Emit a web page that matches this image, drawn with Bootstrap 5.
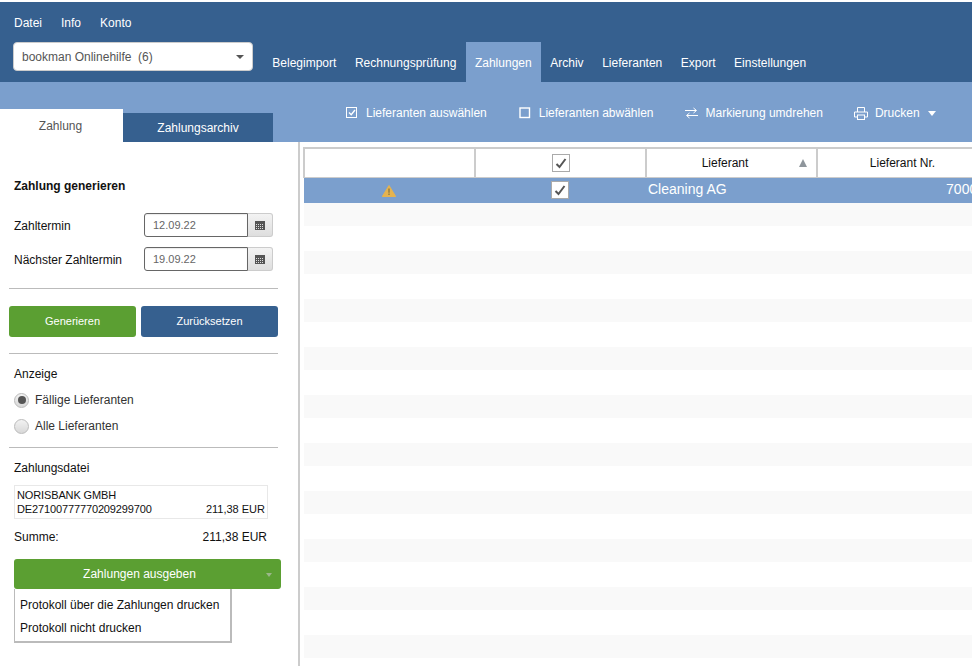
<!DOCTYPE html>
<html lang="de">
<head>
  <meta charset="UTF-8">
  <meta name="viewport" content="width=device-width, initial-scale=1.0">
  <title>bookman - Zahlungen</title>
  <link href="https://cdn.jsdelivr.net/npm/bootstrap@5.3.0/dist/css/bootstrap.min.css" rel="stylesheet">
  <style>
    html, body { height: 100%; overflow: hidden; }
    body {
      font-family: "Liberation Sans", Arial, sans-serif;
      font-size: 12px;
      color: #111;
      background: #fff;
      padding-top: 2px;
    }
    .top-bar { background: #36608f; height: 80px; color: #fff; }
    .top-menu { padding: 12px 14px 0; height: 40px; gap: 19px; }
    .main-tabs a { color: #fff; text-decoration: none; }
    .top-row { height: 40px; padding-left: 13px; }
    .client-select {
      width: 240px; height: 29px; background: #fff; border: 1px solid #ccc; border-radius: 4px;
      color: #555; padding: 0 8px; margin-bottom: 11px; font-size: 12px;
    }
    .caret-down { width: 0; height: 0; border-left: 4px solid transparent; border-right: 4px solid transparent; border-top: 4px solid #555; }
    .main-tabs { margin-left: 10px; }
    .main-tabs a { display: block; height: 40px; line-height: 42px; padding: 0 9.3px; }
    .main-tabs a.current { background: #7b9fcd; }
    .sub-bar { background: #7b9fcd; height: 60px; color: #fff; }
    .side-tabs { width: 273px; align-self: flex-end; height: 33px; }
    .side-tabs div { text-align: center; }
    .tab-on { width: 123px; height: 33px; line-height: 34px; background: #fff; color: #555; padding-right: 2px; }
    .tab-off { width: 150px; height: 29px; line-height: 30px; background: #36608f; color: #fff; }
    .tool-row { padding: 2px 0 0 73px; gap: 32px; height: 60px; }
    .tool-item { gap: 8px; color: #fff; }
    .tool-item svg { display: block; }
    .swap-item { margin-left: -1px; }
    .print-item { gap: 7px; margin-left: -1px; }
    .caret-white { width: 0; height: 0; border-left: 4.5px solid transparent; border-right: 4.5px solid transparent; border-top: 5px solid #fff; margin-left: 1px; }
    .content-area { height: 524px; }
    .side-pane { width: 300px; flex: none; border-right: 2px solid #ccc; padding: 0 20px 0 9px; }
    .side-title { font-weight: bold; padding: 35px 0 0 5px; height: 71px; }
    .date-block { padding-bottom: 7px; }
    .date-row { height: 34px; padding-left: 5px; }
    .date-label { width: 130px; }
    .date-input {
      width: 104px; height: 24px; border: 1px solid #666; border-radius: 3px 0 0 3px; padding: 0 8px; color: #666;
      font-size: 11px; line-height: 22px; box-shadow: inset 0 1px 1px rgba(0,0,0,.08);
    }
    .date-btn {
      width: 25px; height: 24px; border: 1px solid #ccc; border-left: 0; border-radius: 0 3px 3px 0;
      background: linear-gradient(#f3f3f3, #dedede);
    }
    .side-rule { border-top: 1px solid #bbb; opacity: 1; margin: 0; }
    .btn-pair { gap: 5px; padding: 17px 0 16px; }
    .action-btn {
      height: 31px; color: #fff; border: 0; border-radius: 3px; font-size: 11px; line-height: 31px; padding: 0; text-align: center;
    }
    .bg-green { background: #5b9f32; width: 127px; }
    .bg-navy { background: #36608f; width: 137px; }
    .show-block { padding: 11px 0 0 5px; height: 93px; }
    .radio-row { gap: 6px; color: #333; height: 26px; }
    .radio-dot {
      width: 15px; height: 15px; border-radius: 50%; border: 1px solid #bbb; background: linear-gradient(#f2f2f2, #d8d8d8);
      display: flex; align-items: center; justify-content: center;
    }
    .radio-dot.picked::after { content: ""; width: 8px; height: 8px; border-radius: 50%; background: #555; }
    .file-block { padding: 11px 0 0 5px; }
    .file-box {
      width: 254px; height: 34px; border: 1px solid #e8e8e8; padding: 2px 2px 0 2px; font-size: 11px; line-height: 14px; margin-top: 8px;
    }
    .bank-text { letter-spacing: -.13px; }
    .sum-row { width: 253px; padding-top: 9px; height: 40px; }
    .pay-btn {
      width: 267px; height: 30px; background: #5b9f32; border-radius: 3px; color: #fff; line-height: 30px; text-align: center;
      position: relative; padding-right: 16px;
    }
    .pay-caret {
      position: absolute; right: 9px; top: 14px; width: 0; height: 0;
      border-left: 3.5px solid transparent; border-right: 3.5px solid transparent; border-top: 4px solid #9bb889;
    }
    .pay-menu { width: 218px; height: 54px; border: 1px solid #bbb; border-top: 0; border-bottom-width: 2px; border-right-width: 2px; padding: 7px 5px 0; }
    .pay-menu div { height: 23px; }
    .table-pane { flex: 1; min-width: 0; overflow: hidden; padding: 5px 0 0 3px; }
    .pay-grid { table-layout: fixed; width: 855px; border-collapse: collapse; margin: 0; }
    .pay-grid th {
      width: 171px; height: 29px; font-weight: normal; text-align: center; vertical-align: middle; padding: 0;
      border: 2px solid #ccc; border-bottom-width: 1px; color: #111; position: relative;
    }
    .pay-grid th.sort-col { padding-right: 13px; }
    .pay-grid td { height: 25px; padding: 0; border: 0; vertical-align: middle; }
    .pay-grid tr.chosen td { height: 26px; background: #7b9fcd; color: #fff; font-size: 14px; line-height: 18px; padding-bottom: 2px; }
    .pay-grid tr.stripe td { height: 23px; background: #f9f9f9; }
    .pay-grid tr.chosen td.mark-cell { padding: 0 2px 1px 0; }
    .pay-grid tr.chosen td.name-cell { padding-left: 2px; }
    .pay-grid tr.chosen td.num-cell { padding-right: 3px; }
    .sort-up {
      position: absolute; right: 9px; top: 10px; width: 0; height: 0;
      border-left: 4.5px solid transparent; border-right: 4.5px solid transparent; border-bottom: 8px solid #8f969c;
    }
    .tick-box { width: 18px; height: 18px; background: #fff; border: 1px solid #aaa; display: inline-flex; align-items: center; justify-content: center; vertical-align: middle; }
  </style>
</head>
<body>
  <div class="top-bar">
    <div class="top-menu d-flex">
      <span>Datei</span>
      <span>Info</span>
      <span>Konto</span>
    </div>
    <div class="top-row d-flex align-items-end">
      <div class="client-select d-flex align-items-center justify-content-between">
        <span>bookman Onlinehilfe&nbsp; (6)</span>
        <span class="caret-down"></span>
      </div>
      <div class="main-tabs d-flex">
        <a href="#">Belegimport</a>
        <a href="#">Rechnungsprüfung</a>
        <a href="#" class="current">Zahlungen</a>
        <a href="#">Archiv</a>
        <a href="#">Lieferanten</a>
        <a href="#">Export</a>
        <a href="#">Einstellungen</a>
      </div>
    </div>
  </div>

  <div class="sub-bar d-flex">
    <div class="side-tabs d-flex align-items-end">
      <div class="tab-on">Zahlung</div>
      <div class="tab-off">Zahlungsarchiv</div>
    </div>
    <div class="tool-row d-flex align-items-center">
      <div class="tool-item d-flex align-items-center">
        <svg width="12" height="12" viewBox="0 0 12 12" fill="none" stroke="#fff"><rect x=".5" y=".5" width="10" height="10"/><path d="M3 5.500l2.200 2.200L9 3" stroke-width="1.400"/></svg>
        <span>Lieferanten auswählen</span>
      </div>
      <div class="tool-item d-flex align-items-center">
        <svg width="12" height="12" viewBox="0 0 12 12" fill="none" stroke="#fff" stroke-width="1.400"><rect x="1" y="1" width="9.500" height="9.500"/></svg>
        <span>Lieferanten abwählen</span>
      </div>
      <div class="tool-item swap-item d-flex align-items-center">
        <svg width="13" height="12" viewBox="0 0 13 12" fill="none" stroke="#fff"><path d="M0 3.500h11M8.500 1l3 2.500-3 2.500M13 8.500H2M4.500 6l-3 2.500 3 2.500"/></svg>
        <span>Markierung umdrehen</span>
      </div>
      <div class="tool-item print-item d-flex align-items-center">
        <svg width="14" height="13" viewBox="0 0 14 13" fill="none" stroke="#fff"><path d="M3.500 5V.5h7V5M3.500 10H.5V5h13v5h-3"/><rect x="3.500" y="8" width="7" height="4.500"/></svg>
        <span>Drucken</span>
        <span class="caret-white"></span>
      </div>
    </div>
  </div>

  <div class="content-area d-flex">
    <div class="side-pane">
      <div class="side-title">Zahlung generieren</div>
      <div class="date-block">
        <div class="date-row d-flex">
          <div class="date-label pt-1">Zahltermin</div>
          <div class="date-input">12.09.22</div>
          <div class="date-btn d-flex align-items-center justify-content-center">
            <svg width="10" height="9" viewBox="0 0 10 9"><rect width="10" height="9" fill="#555"/><path d="M1 3h1v1H1zM3 3h1v1H3zM5 3h1v1H5zM7 3h1v1H7zM1 5h1v1H1zM3 5h1v1H3zM5 5h1v1H5zM7 5h1v1H7zM1 7h1v1H1zM3 7h1v1H3zM5 7h1v1H5zM7 7h1v1H7z" fill="#ddd"/></svg>
          </div>
        </div>
        <div class="date-row d-flex">
          <div class="date-label pt-1">Nächster Zahltermin</div>
          <div class="date-input">19.09.22</div>
          <div class="date-btn d-flex align-items-center justify-content-center">
            <svg width="10" height="9" viewBox="0 0 10 9"><rect width="10" height="9" fill="#555"/><path d="M1 3h1v1H1zM3 3h1v1H3zM5 3h1v1H5zM7 3h1v1H7zM1 5h1v1H1zM3 5h1v1H3zM5 5h1v1H5zM7 5h1v1H7zM1 7h1v1H1zM3 7h1v1H3zM5 7h1v1H5zM7 7h1v1H7z" fill="#ddd"/></svg>
          </div>
        </div>
      </div>
      <hr class="side-rule">
      <div class="btn-pair d-flex">
        <div class="action-btn bg-green">Generieren</div>
        <div class="action-btn bg-navy">Zurücksetzen</div>
      </div>
      <hr class="side-rule">
      <div class="show-block">
        <div class="mb-1">Anzeige</div>
        <div class="radio-row d-flex align-items-center"><span class="radio-dot picked"></span>Fällige Lieferanten</div>
        <div class="radio-row d-flex align-items-center"><span class="radio-dot"></span>Alle Lieferanten</div>
      </div>
      <hr class="side-rule">
      <div class="file-block">
        <div>Zahlungsdatei</div>
        <div class="file-box">
          <div class="bank-text">NORISBANK GMBH</div>
          <div class="d-flex justify-content-between"><span class="bank-text">DE27100777770209299700</span><span>211,38 EUR</span></div>
        </div>
        <div class="sum-row d-flex justify-content-between"><span>Summe:</span><span>211,38 EUR</span></div>
        <div class="pay-btn">Zahlungen ausgeben<span class="pay-caret"></span></div>
        <div class="pay-menu">
          <div>Protokoll über die Zahlungen drucken</div>
          <div>Protokoll nicht drucken</div>
        </div>
      </div>
    </div>

    <div class="table-pane">
      <table class="pay-grid">
        <thead>
          <tr>
            <th></th>
            <th><span class="tick-box"><svg width="12" height="11" viewBox="0 0 12 11" fill="none" stroke="#555" stroke-width="2"><path d="M1.500 6l3 3 6-8"/></svg></span></th>
            <th class="sort-col">Lieferant<span class="sort-up"></span></th>
            <th>Lieferant Nr.</th>
            <th></th>
          </tr>
        </thead>
        <tbody id="rows">
          <tr class="chosen">
            <td class="text-center mark-cell"><svg width="14" height="12" viewBox="0 0 14 12"><path d="M7 .5L13.700 11.500H.3z" fill="#e5b34f" stroke="#e5b34f" stroke-linejoin="round"/><path d="M6.300 3.500h1.400v4.200H6.300zM6.300 8.600h1.400v1.400H6.300z" fill="#8d7a45"/></svg></td>
            <td class="text-center mark-cell"><span class="tick-box"><svg width="12" height="11" viewBox="0 0 12 11" fill="none" stroke="#555" stroke-width="2"><path d="M1.500 6l3 3 6-8"/></svg></span></td>
            <td class="name-cell">Cleaning AG</td>
            <td class="text-end num-cell">70001</td>
            <td></td>
          </tr>
        </tbody>
      </table>
    </div>
  </div>

  <script>
    // fill the empty striped rows
    const body = document.getElementById('rows');
    for (let i = 0; i < 20; i++) {
      const tr = document.createElement('tr');
      if (i % 2 === 0) tr.className = 'stripe';
      tr.innerHTML = '<td></td><td></td><td></td><td></td><td></td>';
      body.appendChild(tr);
    }
  </script>
  <script src="https://cdn.jsdelivr.net/npm/bootstrap@5.3.0/dist/js/bootstrap.bundle.min.js"></script>
</body>
</html>
